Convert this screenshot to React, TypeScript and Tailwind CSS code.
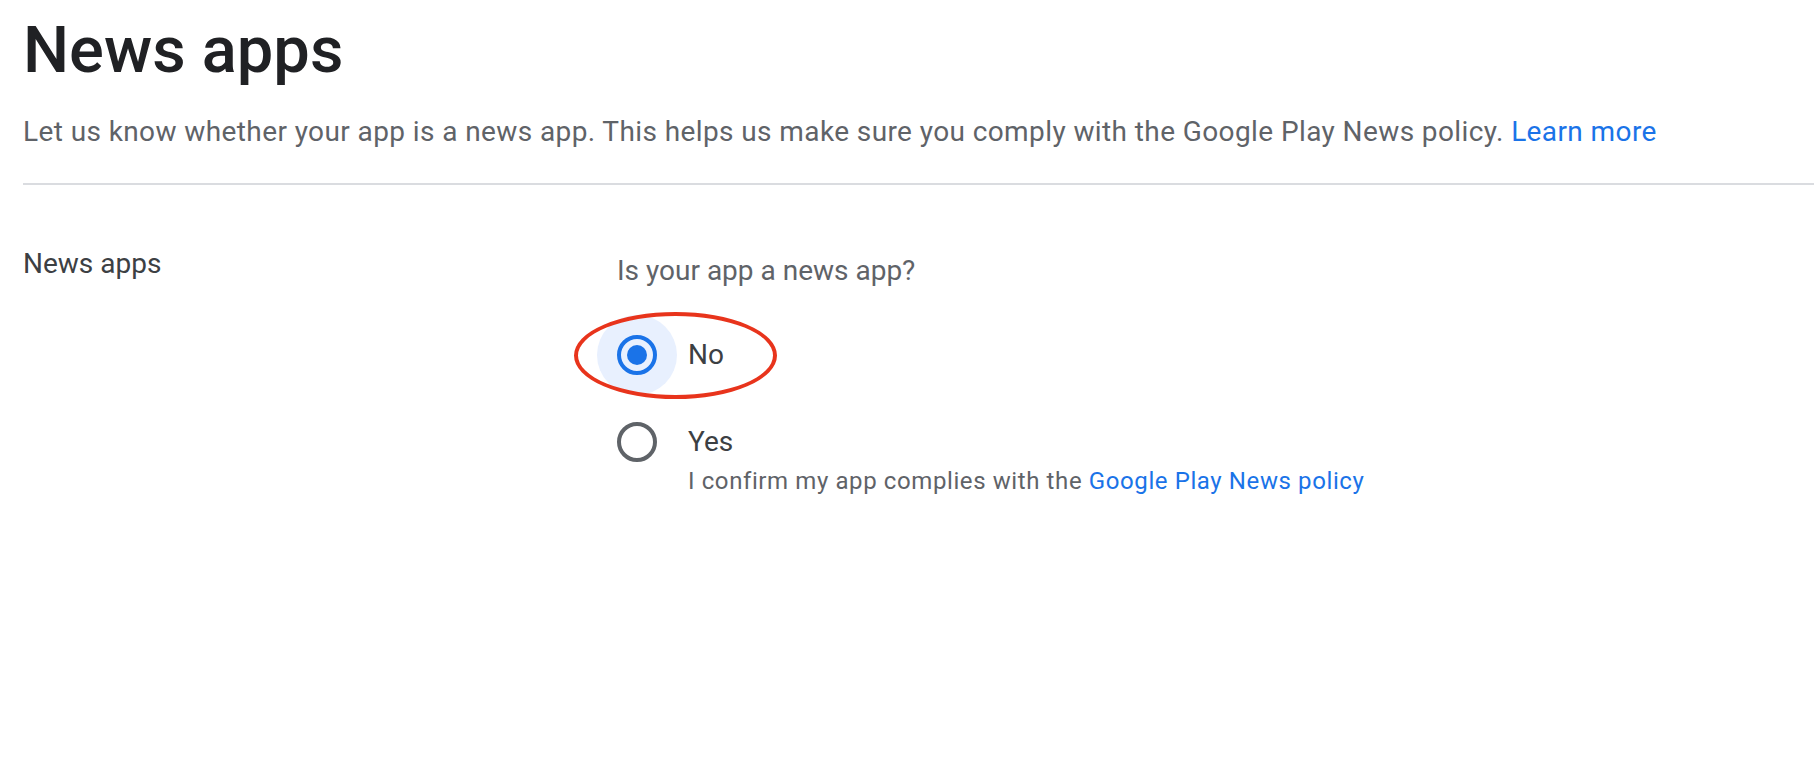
import React from "react";

export default function App() {
  return (
    <div className="min-h-[776px] w-full bg-white font-['Roboto','Liberation_Sans',sans-serif]">
      <div className="pl-[23px]">
        <h1 className="pt-[12px] text-[65px] leading-[76px] font-medium text-[#202124]">News apps</h1>
        <p className="mt-[26px] text-[28px] leading-[36px] text-[#5f6368] tracking-[0.4px]">
          Let us know whether your app is a news app. This helps us make sure you comply with the Google Play News
          policy. <span className="text-[#1a73e8]">Learn more</span>
        </p>
        <div className="mt-[33px] h-[2px] bg-[#dadce0]" />
        <div className="mt-[61px] grid grid-cols-[594px_1fr]">
          <div className="text-[28px] leading-[36px] text-[#3c4043]">News apps</div>
          <div className="pt-[7px]">
            <div className="text-[28px] leading-[36px] text-[#5f6368]">Is your app a news app?</div>
            <div className="relative mt-[26px] -ml-[20px] flex items-center">
              <div className="pointer-events-none absolute -left-[23px] -top-[3px] h-[87px] w-[203px] rounded-[50%] border-[4px] border-[#e8341c]" />
              <div className="flex h-[80px] w-[80px] items-center justify-center rounded-full bg-[#e8f0fe]">
                <div className="flex h-[40px] w-[40px] items-center justify-center rounded-full border-[4px] border-[#1a73e8]">
                  <div className="h-[20px] w-[20px] rounded-full bg-[#1a73e8]" />
                </div>
              </div>
              <span className="ml-[11px] text-[28px] leading-[36px] text-[#3c4043]">No</span>
            </div>
            <div className="mt-[7px] -ml-[20px] flex items-start">
              <div className="flex h-[80px] w-[80px] shrink-0 items-center justify-center">
                <div className="h-[40px] w-[40px] rounded-full border-[4px] border-[#5f6368]" />
              </div>
              <div className="ml-[11px] pt-[22px]">
                <div className="text-[28px] leading-[36px] text-[#3c4043]">Yes</div>
                <div className="mt-[7px] text-[24px] leading-[28px] tracking-[0.6px] text-[#5f6368]">
                  I confirm my app complies with the <span className="text-[#1a73e8]">Google Play News policy</span>
                </div>
              </div>
            </div>
          </div>
        </div>
      </div>
    </div>
  );
}
